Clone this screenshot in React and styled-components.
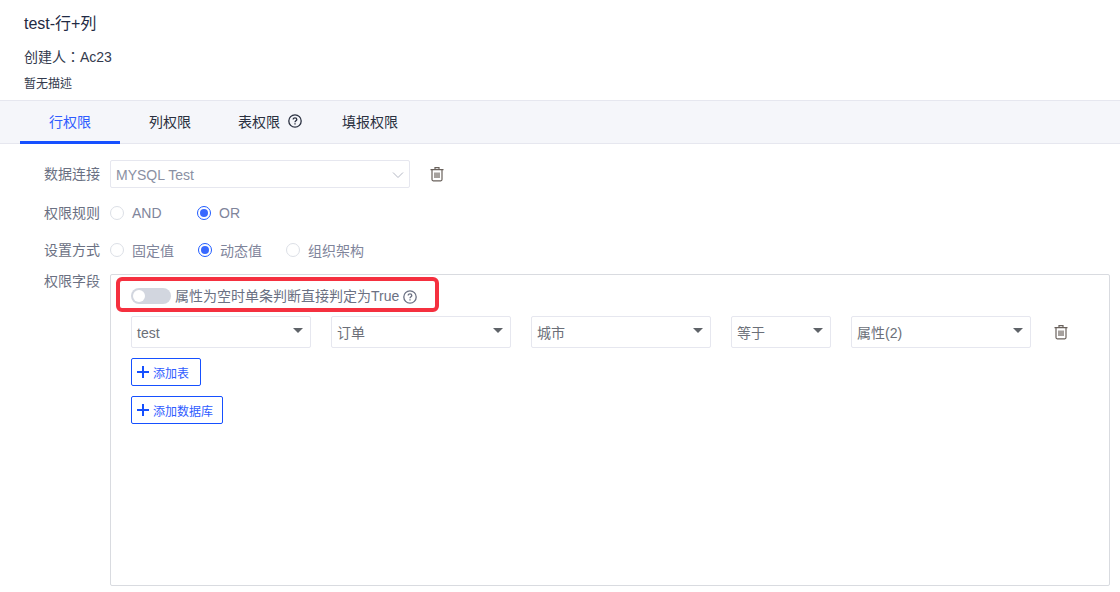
import React from "react";
import styled, { createGlobalStyle } from "styled-components";

const Global = createGlobalStyle`
  html, body { margin: 0; padding: 0; background: #fff; }
  body { font-family: "Liberation Sans", "Noto Sans CJK TC", sans-serif; width: 1120px; height: 592px; overflow: hidden; }
  * { box-sizing: border-box; }
`;

const Header = styled.header`
  height: 100px;
  padding: 14px 24px 0;
`;
const Title = styled.div`
  font-size: 16px;
  line-height: 20px;
  color: #1f2a44;
`;
const Creator = styled.div`
  margin-top: 13px;
  font-size: 14px;
  line-height: 20px;
  color: #333a4d;
`;
const Desc = styled.div`
  margin-top: 9px;
  font-size: 12px;
  line-height: 16px;
  color: #333a4d;
`;
const Tabs = styled.nav`
  height: 44px;
  display: flex;
  padding-left: 20px;
  background: #f5f6fa;
  border-top: 1px solid #e6e7ef;
  border-bottom: 1px solid #e6e7ef;
`;
const Tab = styled.div`
  width: 100px;
  height: 43px;
  display: flex;
  align-items: center;
  justify-content: center;
  gap: 8px;
  padding-bottom: 1px;
  font-size: 14px;
  color: ${(p) => (p.$active ? "#2f5cff" : "#2a3040")};
  border-bottom: 3px solid ${(p) => (p.$active ? "#1650ff" : "transparent")};
`;
const TabHelp = styled.span`
  display: inline-flex;
  margin-top: 1px;
`;
const Form = styled.main`
  padding: 16px 10px 0 0;
  display: flex;
  flex-direction: column;
`;
const Row = styled.div`
  display: flex;
  align-items: ${(p) => p.$align || "center"};
  height: ${(p) => p.$h}px;
  margin-bottom: ${(p) => p.$mb || 0}px;
`;
const Label = styled.label`
  width: 100px;
  margin-right: 10px;
  flex: none;
  text-align: right;
  font-size: 14px;
  line-height: 20px;
  color: #6b7183;
  margin-top: ${(p) => p.$mt || 0}px;
`;
const Select = styled.div`
  width: ${(p) => p.$w}px;
  height: ${(p) => p.$h}px;
  flex: none;
  display: flex;
  align-items: center;
  justify-content: space-between;
  padding: 1px 5px 0;
  background: #fff;
  border: 1px solid #e6e7ef;
  border-radius: 2px;
  font-size: 14px;
  line-height: 20px;
  color: ${(p) => p.$color || "#6b6f78"};
`;
const TrashBtn = styled.span`
  display: inline-flex;
  margin-left: ${(p) => p.$ml}px;
  color: #6a625c;
`;
const RadioGroup = styled.div`
  display: flex;
  align-items: center;
`;
const RadioItem = styled.span`
  display: flex;
  align-items: center;
  gap: 8px;
  width: ${(p) => p.$w}px;
  font-size: 14px;
  color: #7f859b;
`;
const RadioDot = styled.span`
  width: 14px;
  height: 14px;
  flex: none;
  border-radius: 50%;
  background: #fff;
  border: 1px solid ${(p) => (p.$on ? "#1f5bff" : "#dcdfe6")};
  display: flex;
  align-items: center;
  justify-content: center;
  &::after {
    content: "";
    width: 8px;
    height: 8px;
    border-radius: 50%;
    background: ${(p) => (p.$on ? "#3868ff" : "transparent")};
  }
`;
const FieldBox = styled.section`
  position: relative;
  width: 1000px;
  height: 312px;
  flex: none;
  padding: 13px 20px 0;
  border: 1px solid #d9dbe0;
  border-radius: 2px;
`;
const Highlight = styled.div`
  position: absolute;
  left: 5px;
  top: 2px;
  width: 323px;
  height: 35px;
  border: 4px solid #f5303f;
  border-radius: 6px;
  pointer-events: none;
`;
const SwitchRow = styled.div`
  display: flex;
  align-items: center;
  height: 16px;
  font-size: 14px;
  line-height: 16px;
  color: #6b7183;
`;
const Toggle = styled.span`
  width: 40px;
  height: 16px;
  flex: none;
  margin-right: 4px;
  padding: 2px;
  border-radius: 8px;
  background: #d2d6df;
  &::after {
    content: "";
    display: block;
    width: 12px;
    height: 12px;
    border-radius: 50%;
    background: #fff;
  }
`;
const HelpSlot = styled.span`
  display: inline-flex;
  margin: 1px 0 0 4px;
`;
const Conditions = styled.div`
  display: flex;
  align-items: center;
  gap: 20px;
  margin-top: 12px;
`;
const Caret = styled.i`
  width: 0;
  height: 0;
  margin: 0 2px 5px 0;
  border-left: 5px solid transparent;
  border-right: 5px solid transparent;
  border-top: 5px solid #5f6368;
`;
const AddButton = styled.button`
  display: flex;
  align-items: center;
  height: 28px;
  width: ${(p) => p.$w}px;
  margin-top: ${(p) => p.$mt}px;
  padding: 0 0 0 4px;
  gap: 3px;
  background: #fff;
  border: 1px solid #1650ff;
  border-radius: 2px;
  font-family: inherit;
  font-size: 12px;
  color: #2f5cff;
`;

const Trash = () => (
  <svg width="16" height="16" viewBox="0 0 16 16" fill="none" stroke="currentColor" strokeWidth="1.2">
    <path d="M1.5 3.6h13M6 3.6V1.6h4v2" />
    <path d="M3 3.6v10c0 .7.5 1.2 1.2 1.2h7.6c.7 0 1.2-.5 1.2-1.2v-10" />
    <path d="M6 6.6v5.4M8 6.6v5.4M10 6.6v5.4" />
  </svg>
);
const Help = ({ size = 14, color = "#2a3040" }) => (
  <svg width={size} height={size} viewBox="0 0 14 14" fill="none" stroke={color} strokeWidth="1.3">
    <circle cx="7" cy="7" r="6.2" />
    <path d="M5.2 5.5c0-1 .8-1.7 1.8-1.7s1.8.7 1.8 1.6c0 1.3-1.8 1.4-1.8 2.9" />
    <path d="M7 9.3v1.3" />
  </svg>
);
const Chevron = () => (
  <svg width="12" height="12" viewBox="0 0 12 12" fill="none" stroke="#b4b8c4" strokeWidth="1">
    <path d="M1 3.5l5 5 5-5" />
  </svg>
);
const Plus = () => (
  <svg width="14" height="14" viewBox="0 0 14 14" stroke="#1650ff" strokeWidth="2">
    <path d="M7 1v12M1 7h12" />
  </svg>
);

const conditions = [
  ["test", 180],
  ["订单", 180],
  ["城市", 180],
  ["等于", 100],
  ["属性(2)", 180],
];

export default function App() {
  return (
    <>
      <Global />
      <Header>
        <Title>test-行+列</Title>
        <Creator>创建人：Ac23</Creator>
        <Desc>暂无描述</Desc>
      </Header>
      <Tabs>
        <Tab $active>行权限</Tab>
        <Tab>列权限</Tab>
        <Tab>表权限<TabHelp><Help /></TabHelp></Tab>
        <Tab>填报权限</Tab>
      </Tabs>
      <Form>
        <Row $h={28} $mb={11}>
          <Label>数据连接</Label>
          <Select $w={300} $h={28} $color="#8a90a3">
            MYSQL Test
            <Chevron />
          </Select>
          <TrashBtn $ml={19}><Trash /></TrashBtn>
        </Row>
        <Row $h={28} $mb={9}>
          <Label $mt={-1}>权限规则</Label>
          <RadioGroup>
            <RadioItem $w={87}><RadioDot />AND</RadioItem>
            <RadioItem $w={80}><RadioDot $on />OR</RadioItem>
          </RadioGroup>
        </Row>
        <Row $h={28} $mb={10}>
          <Label $mt={-1}>设置方式</Label>
          <RadioGroup>
            <RadioItem $w={88}><RadioDot />固定值</RadioItem>
            <RadioItem $w={88}><RadioDot $on />动态值</RadioItem>
            <RadioItem $w={90}><RadioDot />组织架构</RadioItem>
          </RadioGroup>
        </Row>
        <Row $h={312} $align="flex-start">
          <Label $mt={-3}>权限字段</Label>
          <FieldBox>
            <Highlight />
            <SwitchRow>
              <Toggle />
              属性为空时单条判断直接判定为True
              <HelpSlot><Help color="#6b7183" /></HelpSlot>
            </SwitchRow>
            <Conditions>
              {conditions.map(([text, w]) => (
                <Select key={text} $w={w} $h={32}>
                  {text}
                  <Caret />
                </Select>
              ))}
              <TrashBtn $ml={2}><Trash /></TrashBtn>
            </Conditions>
            <AddButton $w={70} $mt={10}><Plus />添加表</AddButton>
            <AddButton $w={92} $mt={10}><Plus />添加数据库</AddButton>
          </FieldBox>
        </Row>
      </Form>
    </>
  );
}
